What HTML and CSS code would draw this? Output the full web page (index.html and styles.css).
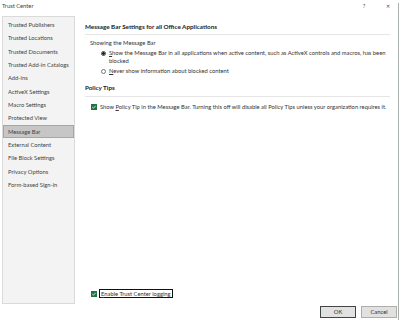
FILE: index.html
```html
<!DOCTYPE html>
<html lang="en">
<head>
    <meta charset="UTF-8">
    <meta name="viewport" content="width=device-width, initial-scale=1.0">
    <title>Trust Center</title>
    <link rel="stylesheet" href="styles.css">
</head>
<body>
    <div class="dialog">
        <div class="titlebar">
            <span class="title">Trust Center</span>
            <span class="help">?</span>
            <span class="close">&#x2715;</span>
        </div>

        <div class="main">
            <ul class="nav">
                <li>Trusted Publishers</li>
                <li>Trusted Locations</li>
                <li>Trusted Documents</li>
                <li>Trusted Add-in Catalogs</li>
                <li>Add-ins</li>
                <li>ActiveX Settings</li>
                <li>Macro Settings</li>
                <li>Protected View</li>
                <li class="selected">Message Bar</li>
                <li>External Content</li>
                <li>File Block Settings</li>
                <li>Privacy Options</li>
                <li>Form-based Sign-in</li>
            </ul>

            <div class="pane">
                <section class="section">
                    <h2>Message Bar Settings for all Office Applications</h2>
                    <div class="group">
                        <p class="label">Showing the Message Bar</p>
                        <div class="radio-row">
                            <span class="radio checked"></span>
                            <span class="key">Show the Message Bar in all applications when active content, such as ActiveX controls and macros, has been blocked</span>
                        </div>
                        <div class="radio-row">
                            <span class="radio"></span>
                            <span class="key">Never show information about blocked content</span>
                        </div>
                    </div>
                </section>

                <section class="section policy">
                    <h2>Policy Tips</h2>
                    <div class="check-row">
                        <svg class="box" width="6" height="6" viewBox="0 0 6 6"><rect width="6" height="6" fill="#217346"/><polyline points="1.3,3.1 2.5,4.2 4.7,1.8" fill="none" stroke="#fff" stroke-width="0.8"/></svg>
                        <span>Show <u>P</u>olicy Tip in the Message Bar. Turning this off will disable all Policy Tips unless your organization requires it.</span>
                    </div>
                </section>

                <div class="check-row logging">
                    <svg class="box" width="6" height="6" viewBox="0 0 6 6"><rect width="6" height="6" fill="#217346"/><polyline points="1.3,3.1 2.5,4.2 4.7,1.8" fill="none" stroke="#fff" stroke-width="0.8"/></svg>
                    <span class="focus key">Enable Trust Center logging</span>
                </div>
            </div>
        </div>

        <div class="buttons">
            <button class="btn default">OK</button>
            <button class="btn">Cancel</button>
        </div>
    </div>
</body>
</html>
```

FILE: styles.css
```css
* {
    margin: 0;
    padding: 0;
    box-sizing: border-box;
}

body {
    background: #fff;
    font-family: Lato, 'Liberation Sans', sans-serif;
    font-size: 5.8px;
    line-height: 8px;
    color: #333;
    width: 400px;
    height: 320px;
    overflow: hidden;
}

.dialog {
    position: relative;
    width: 400px;
    height: 320px;
}

/* thin window edge on the right */
.dialog::after {
    content: '';
    position: absolute;
    top: 3px;
    right: 1px;
    bottom: 0;
    width: 1px;
    background: #a9b0ac;
}

.titlebar {
    height: 16px;
    display: flex;
    align-items: flex-start;
    padding: 2px 0 0 2px;
    color: #444;
}

.title {
    flex: 1;
}

.help {
    width: 10px;
    margin-right: 14px;
    text-align: center;
}

.close {
    width: 10px;
    margin-right: 7px;
    text-align: center;
    font-size: 5px;
}

.main {
    display: flex;
    height: 288px;
}

.nav {
    list-style: none;
    margin-left: 2px;
    width: 73px;
    background: #f3f3f3;
    border: 1px solid #dadada;
    padding-top: 1px;
    color: #444;
}

.nav li {
    height: 13.33px;
    line-height: 13.33px;
    padding-left: 5px;
    white-space: nowrap;
}

.nav li.selected {
    background: #c6c6c6;
    outline: 1px solid #a6a6a6;
    outline-offset: -1px;
}

.pane {
    flex: 1;
    margin-left: 10px;
    margin-right: 10px;
    padding-top: 7px;
    padding-bottom: 6px;
    display: flex;
    flex-direction: column;
}

h2 {
    font-size: 6.3px;
    font-weight: bold;
    color: #222;
    padding-bottom: 3px;
    border-bottom: 1px solid #e6e6e6;
}

.group {
    margin-top: 4px;
    padding-left: 5px;
}

.radio-row {
    display: flex;
    align-items: flex-start;
    margin-top: 2px;
    padding-left: 11px;
}

/* access key letter */
.key::first-letter {
    text-decoration: underline;
}

.radio {
    flex: none;
    width: 5px;
    height: 5px;
    margin: 1.5px 3px 0 0;
    border: 0.7px solid #777;
    border-radius: 50%;
    background: #fff;
}

.radio.checked {
    background: radial-gradient(circle, #222 0 1.2px, #fff 1.5px);
    border-color: #444;
}

.policy {
    margin-top: 9px;
}

.policy h2 {
    padding-bottom: 3.5px;
}

.check-row {
    display: flex;
    align-items: center;
    margin-top: 6px;
    padding-left: 6px;
    white-space: nowrap;
}

.box {
    flex: none;
    margin-right: 3px;
}

.logging {
    margin-top: auto;
}

.logging .box {
    margin-right: 2px;
}

.focus {
    display: inline-block;
    border: 1px solid #111;
    padding: 0 1px 0 1px;
    line-height: 7px;
}

.buttons {
    display: flex;
    justify-content: flex-end;
    gap: 5px;
    padding: 2px 3px 0 0;
}

.btn {
    width: 36px;
    height: 11.5px;
    background: #e1e1e1;
    border: 1px solid #adadad;
    font-family: inherit;
    font-size: 5.8px;
    color: #333;
}

.btn.default {
    border-color: #444;
}
```
